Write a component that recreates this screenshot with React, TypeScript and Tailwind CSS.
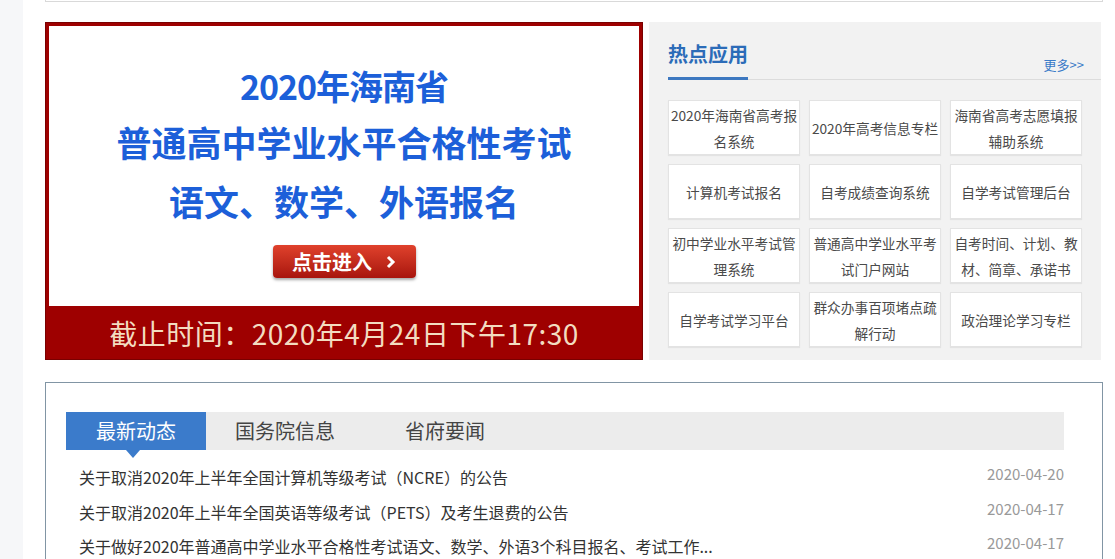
const apps = [
  '2020年海南省高考报名系统',
  '2020年高考信息专栏',
  '海南省高考志愿填报辅助系统',
  '计算机考试报名',
  '自考成绩查询系统',
  '自学考试管理后台',
  '初中学业水平考试管理系统',
  '普通高中学业水平考试门户网站',
  '自考时间、计划、教材、简章、承诺书',
  '自学考试学习平台',
  '群众办事百项堵点疏解行动',
  '政治理论学习专栏',
];

const news = [
  { title: '关于取消2020年上半年全国计算机等级考试（NCRE）的公告', date: '2020-04-20' },
  { title: '关于取消2020年上半年全国英语等级考试（PETS）及考生退费的公告', date: '2020-04-17' },
  { title: '关于做好2020年普通高中学业水平合格性考试语文、数学、外语3个科目报名、考试工作...', date: '2020-04-17' },
];

const font = 'font-["Noto_Sans_CJK_SC","Noto_Sans",sans-serif]';

function Banner() {
  return (
    <div className="w-[598px] h-[338px] bg-[#9e0000] p-[4px] pb-0 flex flex-col shadow-[inset_0_0_0_1px_#7a0000]">
      <div className="h-[280px] bg-white flex flex-col items-center pt-[38px]">
        <div className="text-[34px] leading-[44px] font-bold text-[#1c5fd9] tracking-[-1px]">2020年海南省</div>
        <div className="text-[35px] leading-[48px] mt-[10px] font-bold text-[#1c5fd9] tracking-[0px]">普通高中学业水平合格性考试</div>
        <div className="text-[35px] leading-[48px] mt-[11px] font-bold text-[#1c5fd9]">语文、数学、外语报名</div>
        <div className="mt-[20px] w-[143px] h-[33px] rounded-[4px] bg-gradient-to-b from-[#e0412c] to-[#a8140d] shadow-[0_2px_3px_rgba(0,0,0,0.35)] flex items-center justify-center gap-[14px] text-white">
          <span className="text-[20px] font-bold leading-none">点击进入</span>
          <svg width="10" height="14" viewBox="0 0 10 14">
            <path d="M2 2 L7 7 L2 12" stroke="#fff" strokeWidth="3" fill="none" />
          </svg>
        </div>
      </div>
      <div className="flex-1 flex items-center justify-center text-[28px] text-[#f3dcc0] tracking-[0.5px]">
        截止时间：2020年4月24日下午17:30
      </div>
    </div>
  );
}

function HotApps() {
  return (
    <div className="w-[452px] h-[338px] bg-[#f2f2f2] pt-[14px] pl-[19px]">
      <div className="flex items-end justify-between border-b border-[#dcdcdc] h-[44px]">
        <div className="text-[20px] font-bold text-[#2c6cb8] leading-[30px] pb-[8px] border-b-[3px] border-[#3d78c0] -mb-px w-[80px]">
          热点应用
        </div>
        <div className="text-[13px] text-[#3b7bc8] pr-[17px] pb-[5px]">更多&gt;&gt;</div>
      </div>
      <div className="grid grid-cols-[132px_132px_132px] gap-x-[9px] gap-y-[9px] mt-[20px]">
        {apps.map((a) => (
          <div
            key={a}
            className="h-[55px] bg-white border border-[#e3e3e3] shadow-[0_1px_1px_rgba(0,0,0,0.06)] flex items-center justify-center text-center text-[13.7px] leading-[26px] text-[#4a4a4a]"
          >
            {a}
          </div>
        ))}
      </div>
    </div>
  );
}

function News() {
  return (
    <div className="mt-[22px] border border-[#8195a4] h-[200px] pt-[29px] px-[20px]">
      <div className="h-[38px] bg-[#ececec] flex items-center w-[998px]">
        <div className="relative h-full w-[140px] bg-[#3b7bcb] text-white text-[20px] flex items-center justify-center">
          最新动态
          <div className="absolute left-[60px] top-full w-0 h-0 border-l-[7px] border-r-[7px] border-t-[8px] border-l-transparent border-r-transparent border-t-[#3b7bcb]" />
        </div>
        <div className="text-[20px] text-[#444] ml-[29px]">国务院信息</div>
        <div className="text-[20px] text-[#444] ml-[70px]">省府要闻</div>
      </div>
      <div className="mt-[10px] w-[998px]">
        {news.map((n) => (
          <div key={n.title} className="flex items-center justify-between h-[34.5px] pl-[13px]">
            <span className="text-[16px] text-[#333]">{n.title}</span>
            <span className="text-[15px] text-[#999] -mt-[6px]">{n.date}</span>
          </div>
        ))}
      </div>
    </div>
  );
}

export default function App() {
  return (
    <div className={`w-[1115px] h-[559px] overflow-hidden bg-white flex ${font}`}>
      <div className="w-[23px] h-full bg-[#f6f7f9]" />
      <div className="ml-[22px] w-[1058px]">
        <div className="h-[2px] border-l border-r border-b border-[#d9d9d9]" />
        <div className="mt-[20px] flex gap-[6px]">
          <Banner />
          <HotApps />
        </div>
        <News />
      </div>
    </div>
  );
}
